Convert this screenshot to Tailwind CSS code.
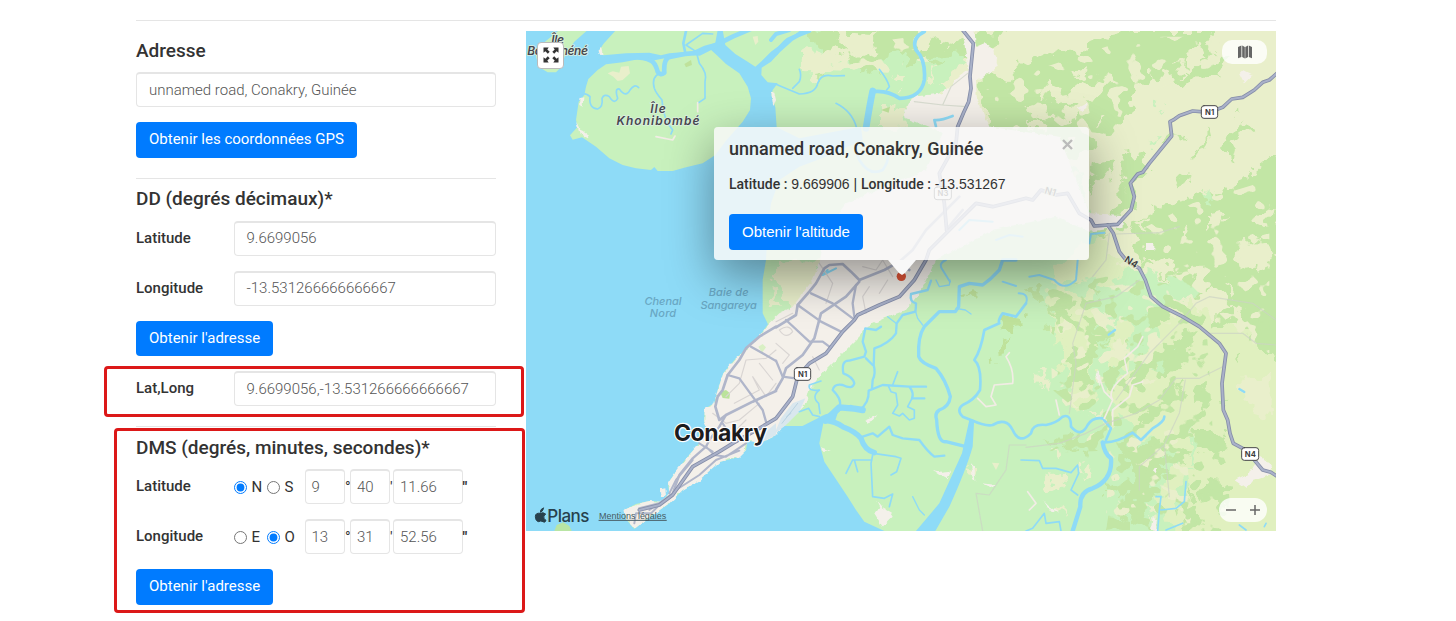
<!DOCTYPE html>
<html lang="fr">
<head>
<meta charset="utf-8">
<title>Coordonnées GPS</title>
<script src="https://cdn.jsdelivr.net/npm/@tailwindcss/browser@4"></script>
</head>
<body class="relative h-[621px] overflow-hidden bg-white font-['Roboto',sans-serif] text-[15px] text-[#333]">
<main class="ml-[136px] w-[1140px] pt-5">
  <div class="h-px bg-[#e5e5e5]"></div>
  <div class="flex pt-[10px]">
    <section class="mr-[30px] w-[360px] shrink-0">
      <h2 class="h-[41px] pt-2 text-[19px] leading-6 font-medium">Adresse</h2>
      <div class="flex h-[35px] items-center rounded border border-t-2 border-[#e5e5e5] px-3 font-light text-[#555]">unnamed road, Conakry, Guinée</div>
      <button class="mt-[15px] block h-9 rounded bg-[#007bff] px-[13px] pb-0.5 text-white">Obtenir les coordonnées GPS</button>
      <div class="mt-5 h-px bg-[#e5e5e5]"></div>
      <h2 class="h-[42px] pt-2 text-[19px] leading-6 font-medium">DD (degrés décimaux)*</h2>
      <div class="mb-[15px] flex h-[35px]"><span class="w-[98px] pt-1.5 leading-[22px] font-medium">Latitude</span><div class="flex flex-1 items-center rounded border border-t-2 border-[#e5e5e5] px-[11.5px] pb-px font-light text-[#555]">9.6699056</div></div>
      <div class="mb-[15px] flex h-[35px]"><span class="w-[98px] pt-1.5 leading-[22px] font-medium">Longitude</span><div class="flex flex-1 items-center rounded border border-t-2 border-[#e5e5e5] px-[11.5px] pb-px font-light text-[#555]">-13.531266666666667</div></div>
      <button class="mb-[15px] block h-[35px] rounded bg-[#007bff] px-[13px] text-white">Obtenir l'adresse</button>
      <div class="flex h-[35px]"><span class="w-[98px] pt-1.5 leading-[22px] font-medium">Lat,Long</span><div class="flex flex-1 items-center rounded border border-t-2 border-[#e5e5e5] px-[11.5px] font-light text-[#555]">9.6699056,-13.531266666666667</div></div>
      <div class="mt-5 h-px bg-[#e5e5e5]"></div>
      <h2 class="h-[42px] pt-[9px] text-[19px] leading-6 font-medium">DMS (degrés, minutes, secondes)*</h2>
      <div class="mb-[15px] flex h-[35px]">
        <span class="w-[98px] pt-1.5 leading-[22px] font-medium">Latitude</span>
        <div class="flex w-[71px] items-center pt-px"><input type="radio" name="ns" checked class="size-[13px] accent-[#007bff]"><span class="w-5 pl-[4.5px]">N</span><input type="radio" name="ns" class="size-[13px]"><span class="pl-[4.5px]">S</span></div>
        <div class="flex w-10 items-center rounded border border-t-2 border-[#e5e5e5] pl-[5.5px] font-light text-[#555]">9</div><span class="w-[5px] pt-[7px] leading-[22px]">°</span>
        <div class="flex w-10 items-center rounded border border-t-2 border-[#e5e5e5] pl-[6px] font-light text-[#555]">40</div><span class="w-[3px] pt-[7px] leading-[22px]">'</span>
        <div class="flex w-[70px] items-center rounded border border-t-2 border-[#e5e5e5] pl-[6px] font-light text-[#555]">11.66</div><span class="-ml-[0.5px] pt-[7px] leading-[22px] font-bold">"</span>
      </div>
      <div class="mb-[15px] flex h-[35px]">
        <span class="w-[98px] pt-1.5 leading-[22px] font-medium">Longitude</span>
        <div class="flex w-[71px] items-center pt-px"><input type="radio" name="eo" class="size-[13px]"><span class="w-5 pl-[4.5px]">E</span><input type="radio" name="eo" checked class="size-[13px] accent-[#007bff]"><span class="pl-[4.5px]">O</span></div>
        <div class="flex w-10 items-center rounded border border-t-2 border-[#e5e5e5] pl-[5.5px] font-light text-[#555]">13</div><span class="w-[5px] pt-[7px] leading-[22px]">°</span>
        <div class="flex w-10 items-center rounded border border-t-2 border-[#e5e5e5] pl-[6px] font-light text-[#555]">31</div><span class="w-[3px] pt-[7px] leading-[22px]">'</span>
        <div class="flex w-[70px] items-center rounded border border-t-2 border-[#e5e5e5] pl-[6px] font-light text-[#555]">52.56</div><span class="-ml-[0.5px] pt-[7px] leading-[22px] font-bold">"</span>
      </div>
      <button class="block h-9 rounded bg-[#007bff] px-[13px] pb-0.5 text-white">Obtenir l'adresse</button>
    </section>

    <section class="relative h-[500px] w-[750px] shrink-0 overflow-hidden bg-[#8edbf7]">
      <svg class="block h-[500px] w-[750px]" viewBox="0 3 2250 1500" stroke-linejoin="round" stroke-linecap="round">
        <defs>
          <!-- irregular vegetation edges -->
          <filter id="rough" filterUnits="userSpaceOnUse" x="0" y="0" width="2250" height="1503" color-interpolation-filters="sRGB">
            <feTurbulence type="fractalNoise" baseFrequency=".022" numOctaves="3" seed="4"/>
            <feDisplacementMap in="SourceGraphic" scale="80" xChannelSelector="R" yChannelSelector="G"/>
          </filter>
          <filter id="coast" filterUnits="userSpaceOnUse" x="0" y="0" width="2250" height="1503" color-interpolation-filters="sRGB">
            <feTurbulence type="fractalNoise" baseFrequency=".06" numOctaves="2" seed="9"/>
            <feDisplacementMap in="SourceGraphic" scale="14" xChannelSelector="R" yChannelSelector="G"/>
          </filter>
          <!-- scattered woodland and clearings -->
          <filter id="woods" filterUnits="userSpaceOnUse" x="0" y="0" width="2250" height="1503" color-interpolation-filters="sRGB">
            <feTurbulence type="fractalNoise" baseFrequency=".022 .026" numOctaves="2" seed="21"/>
            <feColorMatrix values="0 0 0 0 .761 0 0 0 0 .902 0 0 0 0 .647 30 0 0 0 -17.2" result="n"/>
            <feComposite in="n" in2="SourceAlpha" operator="in"/>
          </filter>
          <filter id="fields" filterUnits="userSpaceOnUse" x="0" y="0" width="2250" height="1503" color-interpolation-filters="sRGB">
            <feTurbulence type="fractalNoise" baseFrequency=".02 .024" numOctaves="2" seed="7"/>
            <feColorMatrix values="0 0 0 0 .914 0 0 0 0 .937 0 0 0 0 .796 30 0 0 0 -18" result="n"/>
            <feComposite in="n" in2="SourceAlpha" operator="in"/>
          </filter>
        </defs>
        <!-- land masses -->
        <g fill="#c8f1bd">
          <path d="M100 0H185L145 35L118 75L102 115L90 127H65L40 112L30 80L45 45Z"/>
          <path d="M270 0H575L568 38L535 47L500 64L430 70L405 76L370 68L300 70L232 76L218 64L232 42Z"/>
          <path d="M590 0H825L775 35L735 65L705 95L688 110L665 95L628 72L598 45Z"/>
          <path d="M180 170L187 147L215 120L240 103L290 97L345 86L378 92L420 84L480 76L535 60L552 57L572 75L600 102L640 130L665 170L675 205L672 240L650 275L600 332L568 375L530 400L480 412L440 423L395 423L385 411L375 420L330 415L290 405L250 385L210 350L168 322L140 329L132 316L155 290L150 270L158 215L175 195Z"/>
          <path d="M855 0L800 32L760 68L735 95L707 113L706 135L725 157L755 160L740 180L736 195L748 232L752 292L820 325L900 310L1005 290L1010 330L900 380L820 410L760 450L735 520L725 600L720 690L710 750L710 850L726 883L710 905L680 940L630 985L592 1030L576 1078L565 1120L536 1136L535 1175L546 1200L520 1240L485 1280L450 1325L426 1360L430 1390L405 1415L370 1413L330 1422L295 1440L300 1468L325 1497L340 1485L380 1455L430 1420L470 1380L520 1350L560 1310L580 1296L640 1280L660 1260L665 1230L700 1240L740 1222L770 1188L850 1188L885 1165L892 1180L880 1240L895 1295L965 1400L990 1440L1015 1475L1075 1503H2250V0Z"/>
          <path d="M85 1503L92 1485L112 1477L130 1488L137 1503Z" fill="#b9e5a4"/>
        </g>
        <g filter="url(#rough)">
        <path d="M1870 1000L1900 880L2000 800L2100 720H2300V1550H1960L1900 1400L1960 1250L1840 1220L1790 1110Z" fill="#e0f0bf"/>
        <path d="M1560 750L1640 790L1760 760L1860 640L1800 570L1740 600L1690 640L1600 700ZM1740 1190L1850 1150L1900 1060L1850 1000L1780 1030ZM1570 780L1700 740L1720 900L1700 1100L1640 1130L1600 980ZM1740 900L1830 860L1800 1000L1740 1040Z" fill="#e0f0bf"/>
        <!-- hills -->
        <path d="M1180 -40L1130 50L1190 110L1230 90L1290 -40ZM1290 -40L1200 150L1250 180L1190 240L1400 290L1600 320L1700 560L1770 690L1900 740L2300 740V-40Z" fill="#e9efcb"/>
        <path d="M875 140L850 95L890 60L860 15L900 -40H1180L1160 30L1190 70L1150 95L1120 60L1080 70L1060 130L1020 110L990 130L970 90L910 90L900 130Z" fill="#c2e6a5"/>
        <path d="M838 75L900 55L940 70L985 60L970 90L920 110L860 145L835 120ZM920 20L960 5L1050 10L1030 40L1060 60L1010 85L950 45ZM1100 130L1140 140L1115 180L1085 160Z" fill="#e9efcb"/>
        <path d="M1190 50L1250 20L1270 45L1360 10H1440L1410 50L1320 80L1230 120Z" fill="#c2e6a5"/>
        <path d="M1225 110L1290 85L1320 100L1260 150L1205 165ZM1200 80L1320 70L1300 110Z" fill="#c8f1bd"/>
        <g fill="#c2e6a5">
          <path d="M1355 150L1400 130L1450 155L1480 110L1520 90L1590 60L1640 75L1700 35L1760 20L1830 3H2080L2040 50L2110 80L2070 150L1990 145L1970 165L1880 130L1840 180L1810 230L1780 290L1730 320L1680 360L1590 390L1500 400L1440 380L1400 340L1370 280L1390 230L1355 190Z"/>
          <path d="M1690 590L1740 570L1780 480L1730 430L1690 480L1700 400L1840 370L1870 390L1825 455L1835 500L1810 550L1790 585L1740 620Z"/>
          <path d="M1800 600L1880 550L1930 520L2010 500L2090 480L2170 440L2270 350V1000L2210 960L2160 900L2080 830L2000 770L1940 750L1870 720L1830 650Z"/>
          <path d="M2100 320L2160 280L2185 300L2130 320L2110 400L2090 360ZM2020 350L2050 300L2040 340L2010 385ZM1945 450L2000 425L1985 455L1950 470ZM2160 510L2160 440L2240 370V520ZM1935 320L1960 310L1925 350L1900 350ZM1600 80L1580 110L1620 95ZM2140 230L2150 250L2120 260Z"/>
        </g>
        <g fill="#e9efcb">
          <path d="M1570 200L1620 190L1660 160L1740 145L1775 155L1730 190L1690 215L1600 225ZM1640 130L1670 118L1685 130L1665 145ZM1500 235L1560 225L1590 265L1545 260ZM1610 255L1640 230L1645 280ZM1540 195L1560 155L1570 180ZM1710 260L1735 260L1720 280ZM1500 270L1540 270L1570 310L1520 310Z"/>
          <path d="M1980 80L2010 50L2030 85L2000 120ZM2040 60L2060 45L2070 100L2050 115ZM1950 90L1990 110L1960 130ZM1920 170L1960 185L1935 170Z"/>
          <path d="M1750 430L1790 360L1795 450L1770 510L1720 500ZM2120 650L2180 630L2230 650L2250 700L2160 720L2115 705ZM1950 600L1990 590L1970 640ZM2040 560L2100 550L2080 590L2040 600ZM1870 690L1920 700L1960 730L1900 730ZM2000 690L2040 730L1990 740ZM1840 580L1870 565L1860 600ZM2190 560L2240 530L2230 590Z"/>
          <path d="M1980 810L2060 760L2110 820L2160 860L2130 890L2050 850ZM2140 1030L2200 1050L2240 1010V1150L2160 1130ZM1990 800L1960 850L1900 870L1930 820ZM2100 760L2140 780L2120 800Z"/>
          <path d="M1050 235L1120 225L1145 245L1130 290H1050ZM1560 1340L1595 1345L1600 1385L1570 1370ZM1535 1030L1558 1020L1550 1070ZM1320 1310L1345 1320L1335 1345Z"/>
          <path d="M750 700L800 695L890 700L870 760L810 830L780 800L750 760ZM725 800L740 780L755 840L735 850Z"/>
        </g>
        <!-- southern forest patches -->
        <g fill="#c2e6a5">
          <path d="M1570 830L1620 800L1650 820L1610 860L1640 850L1600 880ZM1500 780L1530 765L1570 800L1530 820ZM1600 980L1650 950L1710 970L1700 1010L1710 1050L1680 1080L1620 1040L1640 1010ZM1670 850L1740 880L1710 910L1740 950L1700 960L1670 900ZM1560 890L1590 885L1580 915ZM1750 1020L1770 1040L1760 1070L1740 1040ZM1680 800L1740 790L1720 830ZM1780 1060L1830 1000L1870 980L1860 1010L1800 1080ZM1860 860L1930 830L1930 860L1880 890ZM1800 930L1835 915L1830 945ZM1915 950L1960 910L2005 905L1990 960L2010 975L1950 1020L1900 1040L1880 990L1930 975Z"/>
          <path d="M1960 1090L1975 1040L1985 1050L1965 1120L1935 1130ZM2005 1070L2045 1065L2045 1130L2010 1160ZM1850 1160L1890 1120L1920 1105L1890 1150L1860 1185ZM1780 1280L1840 1240L1910 1230L1920 1270L1990 1270L1970 1300L1910 1290L1930 1340L1870 1360L1900 1400L1840 1450L1760 1480L1780 1440L1820 1400L1840 1330L1800 1300ZM2010 1200L2060 1200L2110 1240L2060 1270L2000 1250ZM2040 1360L2100 1370L2090 1430L2030 1400ZM2090 1110L2110 1100L2100 1140ZM2060 780L2090 750H2045L2000 800ZM2080 840L2120 830L2130 870L2080 890ZM2130 980L2150 970L2140 1000ZM1960 1450L2010 1430L2020 1470L1980 1503L1960 1480ZM2180 760L2270 750V920L2200 880ZM1780 1380L1810 1370L1790 1410ZM1990 1385L2020 1400L2000 1420ZM1550 1230L1640 1220L1650 1250L1580 1240ZM1660 1260L1690 1265L1680 1290ZM1740 1350L1770 1390L1740 1410Z"/>
          <path d="M1320 790L1345 775L1370 790L1345 815ZM1425 870L1455 855L1500 860L1490 880L1460 915L1440 900ZM1430 935L1450 930L1448 955L1433 958ZM1385 990L1412 985L1410 1000L1390 1005Z" fill="#bfe29b"/>
        </g>
        <g fill="#e9efcb">
          <path d="M1740 860L1770 870L1760 900ZM1780 940L1810 920L1800 970L1750 1000L1730 970ZM1640 1110L1670 1110L1660 1140ZM1700 1160L1740 1140L1720 1170ZM1590 1440L1610 1430L1610 1460ZM1660 1300L1695 1320L1670 1340ZM1850 1040L1880 1070L1840 1090ZM1780 1410L1800 1420L1780 1440ZM1870 1430L1910 1440L1880 1460ZM1680 1230L1720 1210L1710 1235ZM1580 1260L1620 1262L1600 1275Z"/>
        </g>
        <g fill="#c8f1bd"><path d="M1720 830L1730 1000L1740 1060L1715 990ZM1870 850L1900 850L1840 930L1790 960L1840 900ZM2000 1170L2010 1260L1995 1330L1990 1270ZM1980 1330L1990 1380L1960 1440L1940 1400ZM1900 970L1950 950L1910 1010L1860 1020ZM1880 230L1905 220L1885 240ZM1870 330L1905 320L1890 345ZM2020 500L2060 480L2060 510ZM2150 490L2165 480L2160 505Z"/></g>
        </g>
        <path filter="url(#fields)" d="M1380 180L1560 110L1830 20H2080V130L1960 150L1800 220L1760 320L1560 390L1400 330ZM1860 590L2000 520L2230 450V1000L2000 770L1840 700ZM1570 790L1900 750L1980 850L1850 1060L1580 1140ZM1750 1220L2000 1180V1480H1740ZM860 60L1160 20L1120 130L900 120Z"/>
        <path filter="url(#woods)" d="M1550 780L1740 740L1920 760L2040 860L2060 1200L2100 1300L2120 1503H1960L1940 1400L1900 1500H1740L1780 1260L1560 1270L1700 1180L1580 1080L1620 950Z"/>
        <g fill="#e9efcb"><path d="M245 130L260 124L280 128L285 110L308 108L312 130L290 150L275 153L262 140ZM680 20L695 18L697 35L688 45ZM1398 1298L1420 1300L1410 1320Z"/></g>
        <path d="M475 102L495 90L498 105L480 112ZM1065 240L1092 230L1088 248Z" fill="#bfe29b"/>

        <!-- built-up areas -->
        <g fill="#f4f0ea" filter="url(#coast)">
          <path d="M1310 -3H1345L1350 50L1375 40L1405 60L1415 110L1350 150L1352 200L1390 290L1600 320L1690 550L1790 555L1790 590L1690 605L1590 560L1400 600L1230 690L1180 790L1140 840L1075 865L1020 890L1005 915L950 970L900 1020L850 1080L840 1120L790 1170L750 1215L700 1240L662 1230L660 1260L640 1280L580 1296L520 1350L470 1380L430 1420L380 1455L340 1485L325 1497L300 1468L295 1440L330 1422L370 1413L405 1415L430 1390L426 1360L450 1325L485 1280L520 1240L546 1200L535 1175L536 1136L565 1120L576 1078L592 1030L630 985L680 940L710 905L726 883L760 850L800 830L860 750L880 700L900 600L960 520L1200 420L1250 310L1130 260L1160 200L1250 190L1300 140L1325 120Z"/>
          <path d="M1358 90L1372 45L1415 85L1398 120L1360 150ZM1655 235L1690 217L1680 235L1665 243ZM2140 130L2150 120L2180 135L2155 160ZM1858 642H1885V660H1860ZM2125 1350L2170 1330L2190 1300L2200 1280L2230 1295L2240 1330L2180 1350L2160 1375ZM1045 1450L1060 1430L1050 1410L1070 1435L1090 1445L1100 1460L1070 1490ZM403 1378L418 1375L420 1395L408 1400ZM218 60L225 50L230 75L220 74ZM160 205L172 202L170 230L160 225ZM150 275L165 300L190 318L185 325L160 308ZM885 1252L915 1263L888 1262ZM1015 1172L1055 1155L1040 1170L1020 1178ZM1218 1320L1245 1325L1275 1322L1265 1348L1240 1335ZM1335 1300L1345 1310L1348 1355L1340 1340ZM1370 1360L1410 1365L1400 1375ZM1550 1410L1570 1430L1600 1450L1570 1440ZM1710 1040L1718 1020L1725 1070ZM736 190L745 188L750 210L742 232ZM1880 1320L1895 1315L1890 1330ZM1875 1500L1880 1460L1892 1470L1890 1503Z"/>
        </g>
        <path d="M750 1200L765 1165L800 1120L838 1105L820 1145L780 1185L750 1208ZM690 1230L750 1180V1215L705 1238Z" fill="#d9e7ee"/>
        <path d="M768 1180L815 1120M782 1160L795 1150" fill="none" stroke="#b9d3e2" stroke-width="3"/>
        <path d="M582 1085L600 1080L612 1090L610 1106L590 1104Z" fill="#bbe39b"/>
        <path d="M697 950L710 942L720 952L708 968Z" fill="#d9f0c4"/>

        <!-- waterways -->
        <g fill="none" stroke="#8edbf7">
          <path d="M225 90Q340 72 375 92Q388 98 395 125Q403 138 415 128Q412 82 435 80Q490 68 520 70L560 50L620 20L690 -10" stroke-width="14"/>
          <path d="M478 70L472 40L480 3" stroke-width="8"/>
          <path d="M403 130Q375 140 385 175Q390 190 408 210Q410 240 422 275L440 300L435 312" stroke-width="5"/>
          <path d="M512 70L520 100Q545 130 537 155V205L518 218M480 45L530 10M530 10L560 12M480 45L510 65" stroke-width="5"/>
          <path d="M170 190Q185 192 192 200Q188 235 215 237Q232 230 228 205Q235 190 250 200Q265 225 275 205Q265 175 280 177Q300 205 312 180Q325 160 338 173" stroke-width="5"/>
          <path d="M750 70Q775 30 800 22L850 3M735 30L750 12L790 0" stroke-width="12"/>
          <path d="M750 163Q790 180 820 192Q870 190 875 160Q885 130 920 138L955 137M820 118Q828 135 820 155L800 175M930 220Q980 245 992 295M1060 118Q1085 150 1090 170L1082 180" stroke-width="5"/>
          <path d="M1195 5Q1155 25 1170 60Q1200 90 1195 150Q1185 205 1120 205Q1085 180 1040 185" stroke-width="11"/>
          <path d="M1040 183Q1032 220 1020 295" stroke-width="20"/>
          <path d="M990 300Q980 350 1000 390Q1030 440 1070 420Q1100 380 1070 360M1230 290L1225 270Q1245 272 1280 258" stroke-width="8"/>
          <path d="M1300 600L1330 570L1400 575M1410 630L1450 615L1490 620M1260 690Q1235 700 1250 720L1272 755" stroke-width="6"/>
          <path d="M1470 690L1430 690L1420 720L1395 745L1370 765L1330 760L1300 770L1298 830L1288 845L1240 845L1195 890Q1175 920 1178 980Q1185 1000 1230 1015Q1260 1050 1273 1100Q1270 1130 1240 1140Q1225 1150 1232 1170Q1235 1240 1260 1235L1320 1250" stroke-width="10"/>
          <path d="M1215 752L1205 780L1155 792Q1150 815 1170 820Q1170 835 1168 845L1130 855L1112 880L1110 910Q1090 940 1045 955L1043 1005Q1050 1030 1040 1050L1038 1075" stroke-width="7"/>
          <path d="M1168 842L1175 865L1190 885M1110 880L1085 860M1230 750L1240 770L1270 765L1272 750M1290 835L1318 840L1335 852" stroke-width="4"/>
          <path d="M900 1175Q940 1130 975 1128L1000 1140Q1030 1120 1028 1082L1070 1065L1150 1070H1200M1150 1070Q1165 1090 1158 1105H1195" stroke-width="7"/>
          <path d="M898 1172L940 1132L985 1136L1010 1140" stroke-width="19"/>
          <path d="M940 1130Q950 1110 920 1080Q925 1060 950 1065Q980 1080 985 1060Q980 1040 952 1030Q945 990 970 992L1015 980L1020 965L1010 935L1018 895L1050 900L1065 890M1020 985L1040 1005" stroke-width="7"/>
          <path d="M885 1053L850 1065Q845 1085 880 1080Q855 1100 878 1120L882 1150M820 1145L848 1135L860 1155L880 1160" stroke-width="5"/>
          <path d="M1088 1070L1095 1085L1110 1090L1115 1125L1100 1150L1120 1158L1130 1150L1150 1170L1165 1165L1165 1140L1145 1130L1158 1105M1100 1065L1115 1025" stroke-width="5"/>
          <path d="M895 1170Q930 1175 950 1190Q990 1205 1005 1225Q1015 1260 1045 1268" stroke-width="16"/>
          <path d="M1010 1220L1040 1210L1055 1220L1090 1190L1100 1215L1130 1225L1180 1230Q1205 1265 1225 1280L1255 1277" stroke-width="7"/>
          <path d="M1042 1265L1035 1300L1040 1400L1075 1405L1100 1392L1090 1430M1042 1270L1110 1280L1125 1285L1112 1325L1095 1335M1038 1290L980 1290L970 1310L960 1330M985 1290L995 1325" stroke-width="5"/>
          <path d="M1160 1400L1180 1440L1195 1455" stroke-width="4"/>
          <path d="M1500 820L1470 860L1430 850Q1415 870 1420 880L1375 900Q1365 960 1345 990Q1368 1010 1362 1080Q1345 1110 1310 1125Q1290 1140 1310 1160L1335 1170Q1380 1190 1400 1185Q1440 1160 1460 1200Q1480 1245 1515 1210Q1520 1180 1560 1185Q1590 1180 1610 1160Q1635 1150 1635 1190Q1665 1225 1685 1185Q1700 1160 1730 1165L1755 1195L1740 1230M1730 1237Q1770 1240 1820 1208L1845 1230L1880 1195Q1915 1175 1915 1160" stroke-width="8"/>
          <path d="M1730 1237Q1735 1270 1755 1285Q1760 1350 1700 1375Q1660 1385 1663 1430L1640 1503" stroke-width="13"/>
          <path d="M1485 1290L1540 1292L1550 1315L1590 1315L1635 1328L1655 1305L1658 1330L1635 1380L1655 1395M1500 1503L1520 1495L1555 1450L1560 1480L1600 1475L1605 1503M1890 1400H1905L1900 1440L1895 1503M1905 1440L1950 1435L1975 1415L1980 1355M1920 1500L1970 1480M2140 1485L2160 1500M2215 1490L2220 1480" stroke-width="5"/>
          <path d="M1500 820Q1510 790 1478 790M1430 755L1470 768M1585 750Q1615 785 1650 750M1650 750L1655 690M1510 740L1540 735L1585 750M1735 608L1695 612L1690 640M905 720L890 735L930 715" stroke-width="6"/>
          <path d="M1748 914L1767 900M2140 1077L2155 1086" stroke-width="7"/>
        </g>
        <path d="M1330 1170Q1350 1165 1344 1180L1340 1250Q1320 1320 1270 1430L1228 1503H1170L1240 1420L1308 1270Z" fill="#8edbf7"/>
        <path d="M825 1190L875 1165Q905 1145 935 1150L925 1180L885 1180L860 1220Z" fill="#8edbf7"/>

        <!-- minor tracks -->
        <g fill="none" stroke="#f2ece5" stroke-width="5">
          <path d="M1355 1105L1380 1130L1410 1125L1395 1100L1405 1065L1460 1060Q1465 1020 1440 980L1450 968M1715 1030L1735 1085L1760 1110L1735 1165M1760 1110Q1740 1080 1805 1030L1795 985L1835 950L1850 920M1760 1185L1760 1140L1810 1100L1820 1065L1850 1055M1590 1110L1600 1155M1505 1385L1530 1420L1510 1440M390 320L440 330L447 318M515 218V245"/>
        </g>
        <g fill="none" stroke="#ccd3c4" stroke-width="3.5" opacity=".7">
          <path d="M1500 1252L1600 1240L1680 1210L1740 1180L1830 1150L1900 1110L1950 1045L2020 1045L2090 1010M1630 1150L1650 1000L1640 940L1660 880L1680 820L1770 800L1840 750M1770 1110L1870 970L1960 880L2010 820L2050 800L2180 820L2250 870M2040 910L2150 910L2190 940L2250 945M1978 1050L1960 1150L1915 1245L1930 1400M1915 1245L1840 1310V1380M1450 1245H1500M1450 1245L1440 1320L1390 1395L1350 1390L1370 1503M1770 612L1900 608L1960 590M1750 610L1740 690L1700 740M1165 215L1250 225L1275 170L1325 130M1250 225L1320 230"/>
        </g>
        <g fill="none" stroke="#d9d5d3" stroke-width="3.5">
          <path d="M750 875L800 850M760 900Q790 880 800 905Q780 930 760 900M750 940L790 975L770 1000M600 1100L640 1060L660 990L720 985L750 960M625 1120L700 1080L680 1040L720 1100L750 1060M560 1150L600 1180L640 1170L700 1120M1030 770L1010 800L1020 850M1060 790L1085 750M700 1000L740 1050M860 980L880 1020M620 1210L660 1170M650 1190L700 1200M880 700L920 760L900 820M1010 710L1050 720L1070 690L1100 740"/>
        </g>
        <!-- secondary roads -->
        <g fill="none" stroke="#b0b6ca" stroke-width="8">
          <path d="M750 892L810 855L815 825L850 785L870 760L895 715L910 705L950 702L975 725L1000 750L1075 720L1120 695"/>
          <path d="M1000 755L960 800L885 850L865 925L830 975L780 1015L770 1045L750 1080"/>
          <path d="M990 765L980 820L985 860M815 825L885 875L945 905M855 790L920 820L980 865M780 870L850 935L890 935L910 950M750 992L770 1040L808 1045" stroke-width="7"/>
          <path d="M750 890L700 920L660 955L640 990L605 1035L590 1080L575 1100L568 1130L580 1170L600 1155L680 1115L750 1083"/>
          <path d="M675 950L710 970L750 993M605 1035L640 1045L680 1100L710 1140L720 1175M600 1155L580 1190L550 1230L540 1250L500 1285L460 1335L440 1390L400 1420L340 1435" stroke-width="7"/>
          <path d="M590 1180L610 1210L590 1230M540 1250L565 1275L600 1280L660 1240M450 1380L520 1335L570 1290L640 1262M430 1390L450 1350L500 1290M520 1240L560 1265M400 1425L375 1450L330 1450L325 1480M400 1420L370 1440" stroke-width="6"/>
          <path d="M1120 695L1160 660L1200 600L1250 550L1300 500M1260 600L1310 540M1100 695L1150 720"/>
        </g>
        <!-- national roads -->
        <g fill="none">
          <g id="trunk">
            <path d="M340 1440L400 1425L440 1395L500 1310L580 1265L620 1240L700 1195L750 1165L800 1100L815 1040L850 1000L900 970L950 905L985 870L995 855L1060 825L1120 800L1165 750L1200 690L1210 660L1270 600L1350 520L1400 530L1500 505L1520 510L1545 480L1590 495L1625 490L1660 550L1695 570L1705 588L1775 583L1815 540L1825 500L1813 460L1835 432L1850 427L1870 400L1937 318L1932 275L1945 268L1960 257L2000 243L2050 247L2090 232L2117 207L2150 202L2185 180L2210 157L2230 150L2255 128" stroke="#858da8" stroke-width="11"/>
            <path d="M1310 0L1342 40L1332 140L1335 175L1328 215L1312 250L1295 290L1290 340L1240 430L1255 520L1262 600" stroke="#858da8" stroke-width="11"/>
            <path d="M1745 585L1762 610L1780 665L1800 690L1840 715L1858 750L1875 800L1910 830L1970 860L2020 890L2080 940L2100 970L2088 1060L2092 1140L2105 1170L2112 1210L2122 1240L2150 1255L2185 1290L2210 1320L2235 1327L2255 1340" stroke="#858da8" stroke-width="11"/>
          </g>
          <path d="M340 1440L400 1425L440 1395L500 1310L580 1265L620 1240L700 1195L750 1165L800 1100L815 1040L850 1000L900 970L950 905L985 870L995 855L1060 825L1120 800L1165 750L1200 690L1210 660L1270 600L1350 520L1400 530L1500 505L1520 510L1545 480L1590 495L1625 490L1660 550L1695 570L1705 588L1775 583L1815 540L1825 500L1813 460L1835 432L1850 427L1870 400L1937 318L1932 275L1945 268L1960 257L2000 243L2050 247L2090 232L2117 207L2150 202L2185 180L2210 157L2230 150L2255 128M1310 0L1342 40L1332 140L1335 175L1328 215L1312 250L1295 290L1290 340L1240 430L1255 520L1262 600M1745 585L1762 610L1780 665L1800 690L1840 715L1858 750L1875 800L1910 830L1970 860L2020 890L2080 940L2100 970L2088 1060L2092 1140L2105 1170L2112 1210L2122 1240L2150 1255L2185 1290L2210 1320L2235 1327L2255 1340" stroke="#a9b1c9" stroke-width="6"/>
        </g>
        <!-- route shields -->
        <g font-family="Inter,sans-serif" font-weight="700" font-size="23" text-anchor="middle" fill="#3c3c3e">
          <g stroke="#48484a" stroke-width="3" fill="#fff"><rect x="2026" y="227" width="49" height="38" rx="8"/><rect x="805" y="1013" width="49" height="38" rx="8"/><rect x="2147" y="1253" width="51" height="38" rx="8"/><rect x="1225" y="471" width="51" height="38" rx="8"/></g>
          <text x="2051" y="254">N1</text><text x="830" y="1040">N1</text><text x="2173" y="1280">N4</text><text x="1251" y="498">N3</text>
          <g stroke="#e6edd2" stroke-width="5" paint-order="stroke" font-weight="600" font-size="29"><text x="1816" y="706" transform="rotate(32 1816 696)">N4</text><text x="1573" y="495" transform="rotate(17 1573 485)">N1</text></g>
        </g>
        <!-- place names -->
        <g font-family="Inter,sans-serif" font-style="italic" font-weight="600" text-anchor="middle" font-size="36">
          <g fill="#47474f" stroke="#dcefe0" stroke-width="5" paint-order="stroke">
            <text x="396" y="249" textLength="47">Île</text><text x="396" y="286" textLength="249">Khonibombé</text><text x="95" y="43" textLength="38">Île</text><text x="95" y="76" textLength="182">Boulbinéné</text>
          </g>
          <g fill="#69a7c3" font-size="33" font-weight="500"><text x="411" y="825" textLength="111">Chenal</text><text x="411" y="862" textLength="79">Nord</text><text x="608" y="797" textLength="120">Baie de</text><text x="608" y="837" textLength="169">Sangareya</text></g>
        </g>
        <text x="444" y="1234" textLength="279" font-family="Inter,sans-serif" font-weight="700" font-size="69" fill="#1c1c1e" stroke="#fff" stroke-width="7" paint-order="stroke">Conakry</text>
        <circle cx="1126" cy="739" r="14" fill="#dc5336"/>
        <!-- maker's mark and attribution -->
        <g fill="#27414d">
          <path d="M52 1437Q50 1445 43 1447Q42 1438 52 1434ZM43 1450Q51 1445 59 1452Q51 1458 54 1465Q56 1469 60 1471Q57 1480 51 1475Q44 1471 38 1475Q29 1474 28 1460Q28 1447 43 1450Z" stroke="#27414d" stroke-width="3"/>
          <text x="64" y="1475" textLength="126" font-family="Inter,sans-serif" font-weight="500" font-size="51">Plans</text>
          <text x="219" y="1467" textLength="202" font-family="Liberation Sans,sans-serif" font-size="27" fill="#465a61">Mentions légales</text>
          <path d="M219 1471H421" stroke="#465a61" stroke-width="3"/>
        </g>
      </svg>

      <!-- fullscreen -->
      <button class="absolute top-[11px] left-[11px] flex size-[27px] items-start justify-center rounded border border-[#bbb] bg-white pt-1">
        <svg class="size-4" viewBox="0 0 16 16" fill="#333"><path d="M.5 .5h5.2L4.3 2.4 6.7 4.8 4.8 6.7 2.4 4.3 .5 5.7zM15.5 .5v5.2l-1.9-1.4L11.2 6.7 9.3 4.8l2.4-2.4L10.3 .5zM.5 15.5v-5.2l1.9 1.4L4.8 9.3 6.7 11.2l-2.4 2.4L5.7 15.5zM15.5 15.5h-5.2l1.4-1.9L9.3 11.2 11.2 9.3l2.4 2.4L15.5 10.3z"/></svg>
      </button>
      <!-- map type -->
      <button class="absolute top-[9px] right-[9px] flex h-6 w-[45px] items-center justify-center rounded-[10px] bg-white/80">
        <svg class="h-[14px] w-4" viewBox="0 0 16 14" fill="#666"><path d="M1 2L4.4 .5V12L1 13.3ZM5.2 .5L7.8 2V13.4L5.2 12ZM8.3 2L11 .6V12L8.3 13.4ZM11.8 .6L15 2V13.3L11.8 12Z"/></svg>
      </button>
      <!-- zoom -->
      <div class="absolute right-[9px] bottom-[9px] flex h-6 w-12 items-center justify-around rounded-xl bg-white/80">
        <svg class="size-3" viewBox="0 0 12 12" stroke="#666" stroke-width="1.5"><path d="M1 6h10"/></svg>
        <svg class="size-3" viewBox="0 0 12 12" stroke="#666" stroke-width="1.5"><path d="M1 6h10M6 1v10"/></svg>
      </div>

      <!-- callout -->
      <div class="absolute top-[96px] left-[188px] h-[133px] w-[375px] rounded bg-[#f8f8f8]/85 px-[15px] pt-[11px] shadow-[0_16px_48px_rgba(0,0,0,0.4)]">
        <h3 class="text-[18px] leading-[22px] font-medium whitespace-nowrap">unnamed road, Conakry, Guinée</h3>
        <svg class="absolute top-[12px] right-[16px] size-[11px]" viewBox="0 0 11 11" stroke="#bbb" stroke-width="2.4"><path d="M1 1L10 10M10 1L1 10"/></svg>
        <p class="mt-[14px] font-['Liberation_Sans',sans-serif] text-[14px] leading-5 whitespace-nowrap"><b class="font-['Roboto',sans-serif] font-medium">Latitude :</b> 9.669906 | <b class="font-['Roboto',sans-serif] font-medium">Longitude :</b> -13.531267</p>
        <button class="mt-5 block h-9 rounded bg-[#007bff] px-[13px] font-['Liberation_Sans',sans-serif] text-[15px] text-white">Obtenir l'altitude</button>
        <svg class="absolute top-[133px] left-[174px] h-[15px] w-[28px]" viewBox="0 0 28 15" fill="#f8f8f8"><path d="M0 0H28L17 13L14 15L11 13Z"/></svg>
      </div>
    </section>
  </div>
</main>
<!-- highlighted areas -->
<div class="pointer-events-none absolute top-[366px] left-[104px] h-[51px] w-[420px] rounded-sm border-3 border-[#dc1818]"></div>
<div class="pointer-events-none absolute top-[428px] left-[114px] h-[185px] w-[411px] rounded-sm border-3 border-[#dc1818]"></div>
</body>
</html>
